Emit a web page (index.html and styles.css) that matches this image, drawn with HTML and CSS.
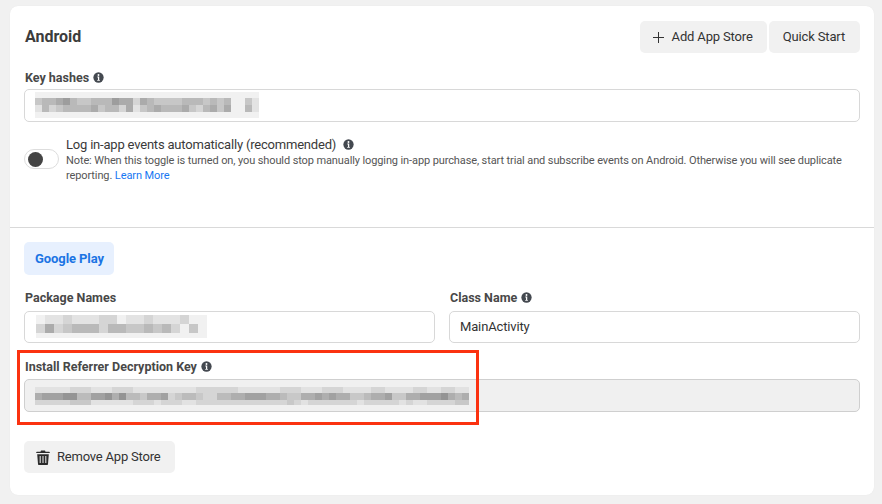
FILE: index.html
```html
<!DOCTYPE html>
<html lang="en">
<head>
<meta charset="utf-8">
<title>Android settings</title>
<link rel="stylesheet" href="styles.css">
</head>
<body>
<svg class="defs" width="0" height="0" aria-hidden="true">
  <symbol id="info" viewBox="0 0 12 12">
    <circle cx="6" cy="6" r="5.6" fill="#444950"/>
    <circle cx="6" cy="3.2" r="1.05" fill="#fff"/>
    <path d="M4.7 5h2.1v3.6h.7v1H4.6v-1h.8V6h-.7z" fill="#fff"/>
  </symbol>
</svg>
<main class="card">
  <section class="top">
    <header class="head">
      <h1 class="title">Android</h1>
      <div class="actions">
        <button class="btn"><svg class="plus" viewBox="0 0 11 11"><path d="M5.5 0v11M0 5.5h11" stroke="#333" stroke-width="1" fill="none"/></svg>Add App Store</button>
        <button class="btn">Quick Start</button>
      </div>
    </header>
    <label class="label">Key hashes <svg class="info"><use href="#info"/></svg></label>
    <div class="input">
      <div class="mosaic mosaic-hash" data-cell="7" data-rows="6:11111111111111111111111111111111|7:45567544555766365444455545451142|7:25345555645536245655564356461152|6:11111111111111111111111111111111"></div>
    </div>
    <div class="toggle-row">
      <span class="toggle"><span class="knob"></span></span>
      <div class="toggle-text">
        <div class="toggle-title">Log in-app events automatically (recommended) <svg class="info info-wide"><use href="#info"/></svg></div>
        <p class="note">Note: When this toggle is turned on, you should stop manually logging in-app purchase, start trial and subscribe events on Android. Otherwise you will see duplicate reporting. <a class="link">Learn More</a></p>
      </div>
    </div>
  </section>
  <section class="store">
    <div class="tab">Google Play</div>
    <div class="cols">
      <div class="col">
        <label class="label">Package Names</label>
        <div class="input input-short">
          <div class="mosaic mosaic-pkg" data-cell="9" data-rows="9:1223222331223222311|9:3634555355445453141|5:1111111111111111111"></div>
        </div>
      </div>
      <div class="col">
        <label class="label">Class Name <svg class="info"><use href="#info"/></svg></label>
        <div class="input input-short input-text">MainActivity</div>
      </div>
    </div>
    <div class="key-field">
      <label class="label">Install Referrer Decryption Key <svg class="info"><use href="#info"/></svg></label>
      <div class="input input-wide input-disabled">
        <div class="mosaic mosaic-key" data-cell="7" data-rows="6:11111222111222111111111222222111111222111222111122111122112211|7:56667744667574435562344322445566655433556565533455633556667545|5:22222333111111222122211222222222222232122222221222221211222233"></div>
      </div>
      <div class="annotation"></div>
    </div>
    <button class="btn btn-remove"><svg class="trash" viewBox="0 0 14 15"><path d="M5 .6h4l.5 1.1h3.6c.4 0 .7.3.7.7v.7H.2v-.7c0-.4.3-.7.7-.7h3.6zM1.2 4.2h11.6l-.8 9.7c0 .6-.5 1-1 1H3c-.5 0-1-.4-1-1z" fill="#2b2b2b"/><path d="M4.2 6v7M7 6v7M9.8 6v7" stroke="#f0f0f0" stroke-width="1" fill="none"/></svg>Remove App Store</button>
  </section>
</main>
<script src="mosaic.js"></script>
</body>
</html>
```
FILE: styles.css
```css
* { box-sizing: border-box; }
html, body { margin: 0; height: 100%; }
body {
  background: #f1f1f1;
  font-family: Roboto, "Liberation Sans", sans-serif;
  color: #333;
  padding: 6px 8px 9px 10px;
  overflow: hidden;
}
.defs { position: absolute; }
.card {
  background: #fff;
  border-radius: 8px;
  height: 489px;
  box-shadow: 0 0 1px rgba(0,0,0,.08);
}
.top { height: 222px; padding: 15px 14px 0; border-bottom: 1px solid #d9d9d9; }
.head { display: flex; justify-content: space-between; align-items: center; height: 32px; }
.title { margin: -1px 0 0 1px; font-size: 16px; font-weight: 700; color: #3c3c3c; }
.actions { display: flex; gap: 2px; }
.btn {
  display: inline-flex;
  align-items: center;
  height: 32px;
  padding: 0 14px 1px 13px;
  border: 0;
  border-radius: 5px;
  background: #f1f1f1;
  font: 400 13px Roboto, sans-serif;
  letter-spacing: -.15px;
  color: #333;
}
.actions .btn:last-child { padding: 0 15px 1px 14px; }
.plus { width: 11px; height: 11px; margin: 1px 8px 0 0; }
.label {
  display: flex;
  align-items: center;
  gap: 4px;
  height: 16px;
  padding-left: 1px;
  font-size: 12.5px;
  font-weight: 700;
  color: #484848;
}
.top .label { margin-top: 16px; }
.info { width: 11px; height: 11px; }
.info-wide { margin-left: 4px; vertical-align: -1px; }
.input {
  position: relative;
  height: 33px;
  margin-top: 4px;
  border: 1px solid #d8d8d8;
  border-radius: 5px;
  background: #fff;
}
.input-short { height: 32px; margin-top: 6px; }
.input-wide { margin-top: 5px; }
.input-text { display: flex; align-items: center; padding: 0 0 1px 10px; font-size: 13px; letter-spacing: -.15px; color: #333; }
.input-disabled { background: #f0f0f0; border-color: #cfcfcf; }
.mosaic { position: absolute; display: flex; flex-direction: column; }
.mosaic-row { display: flex; }
.mosaic-hash { left: 10px; top: 2px; }
.mosaic-pkg { left: 11px; top: 3px; }
.mosaic-key { left: 10px; top: 7px; }
.toggle-row { display: flex; gap: 7px; margin-top: 14px; }
.toggle {
  flex: none;
  display: flex;
  align-items: center;
  width: 35px;
  height: 20px;
  margin-top: 13px;
  padding-left: 3px;
  border: 1px solid #ddd;
  border-radius: 10px;
}
.knob { width: 15px; height: 15px; border-radius: 50%; background: #444; }
.toggle-title { padding-top: 1px; font-size: 13px; line-height: 16px; color: #3a3a3a; letter-spacing: -.2px; }
.note { margin: 0; font-size: 11px; line-height: 15px; letter-spacing: -.11px; color: #555; width: 785px; }
.link { color: #1877f2; }
.store { padding: 14px 14px 0; }
.tab {
  display: flex;
  align-items: center;
  justify-content: center;
  width: 90px;
  height: 33px;
  padding-left: 1px;
  border-radius: 5px;
  background: #e7f0fe;
  color: #1b74e4;
  font-size: 13px;
  font-weight: 700;
  letter-spacing: -.1px;
}
.cols { display: flex; gap: 14px; margin-top: 14px; }
.col { flex: 1; }
.key-field { position: relative; margin-top: 15px; }
.annotation {
  position: absolute;
  left: -7px;
  top: -8px;
  width: 462px;
  height: 75px;
  border: 3px solid #fb3210;
}
.btn-remove { margin-top: 29px; padding: 0 14px 1px 12px; letter-spacing: -.2px; }
.trash { width: 14px; height: 15px; margin: 1px 7px 0 0; }
```
FILE: mosaic.js
```js
document.querySelectorAll('.mosaic').forEach(function (m) {
  var cell = Number(m.dataset.cell);
  m.dataset.rows.split('|').forEach(function (spec) {
    var parts = spec.split(':');
    var row = document.createElement('div');
    row.className = 'mosaic-row';
    parts[1].split('').forEach(function (d) {
      var c = document.createElement('span');
      c.style.width = cell + 'px';
      c.style.height = parts[0] + 'px';
      c.style.background = 'rgba(0,0,0,' + Number(d) * 0.055 + ')';
      row.appendChild(c);
    });
    m.appendChild(row);
  });
});
```
